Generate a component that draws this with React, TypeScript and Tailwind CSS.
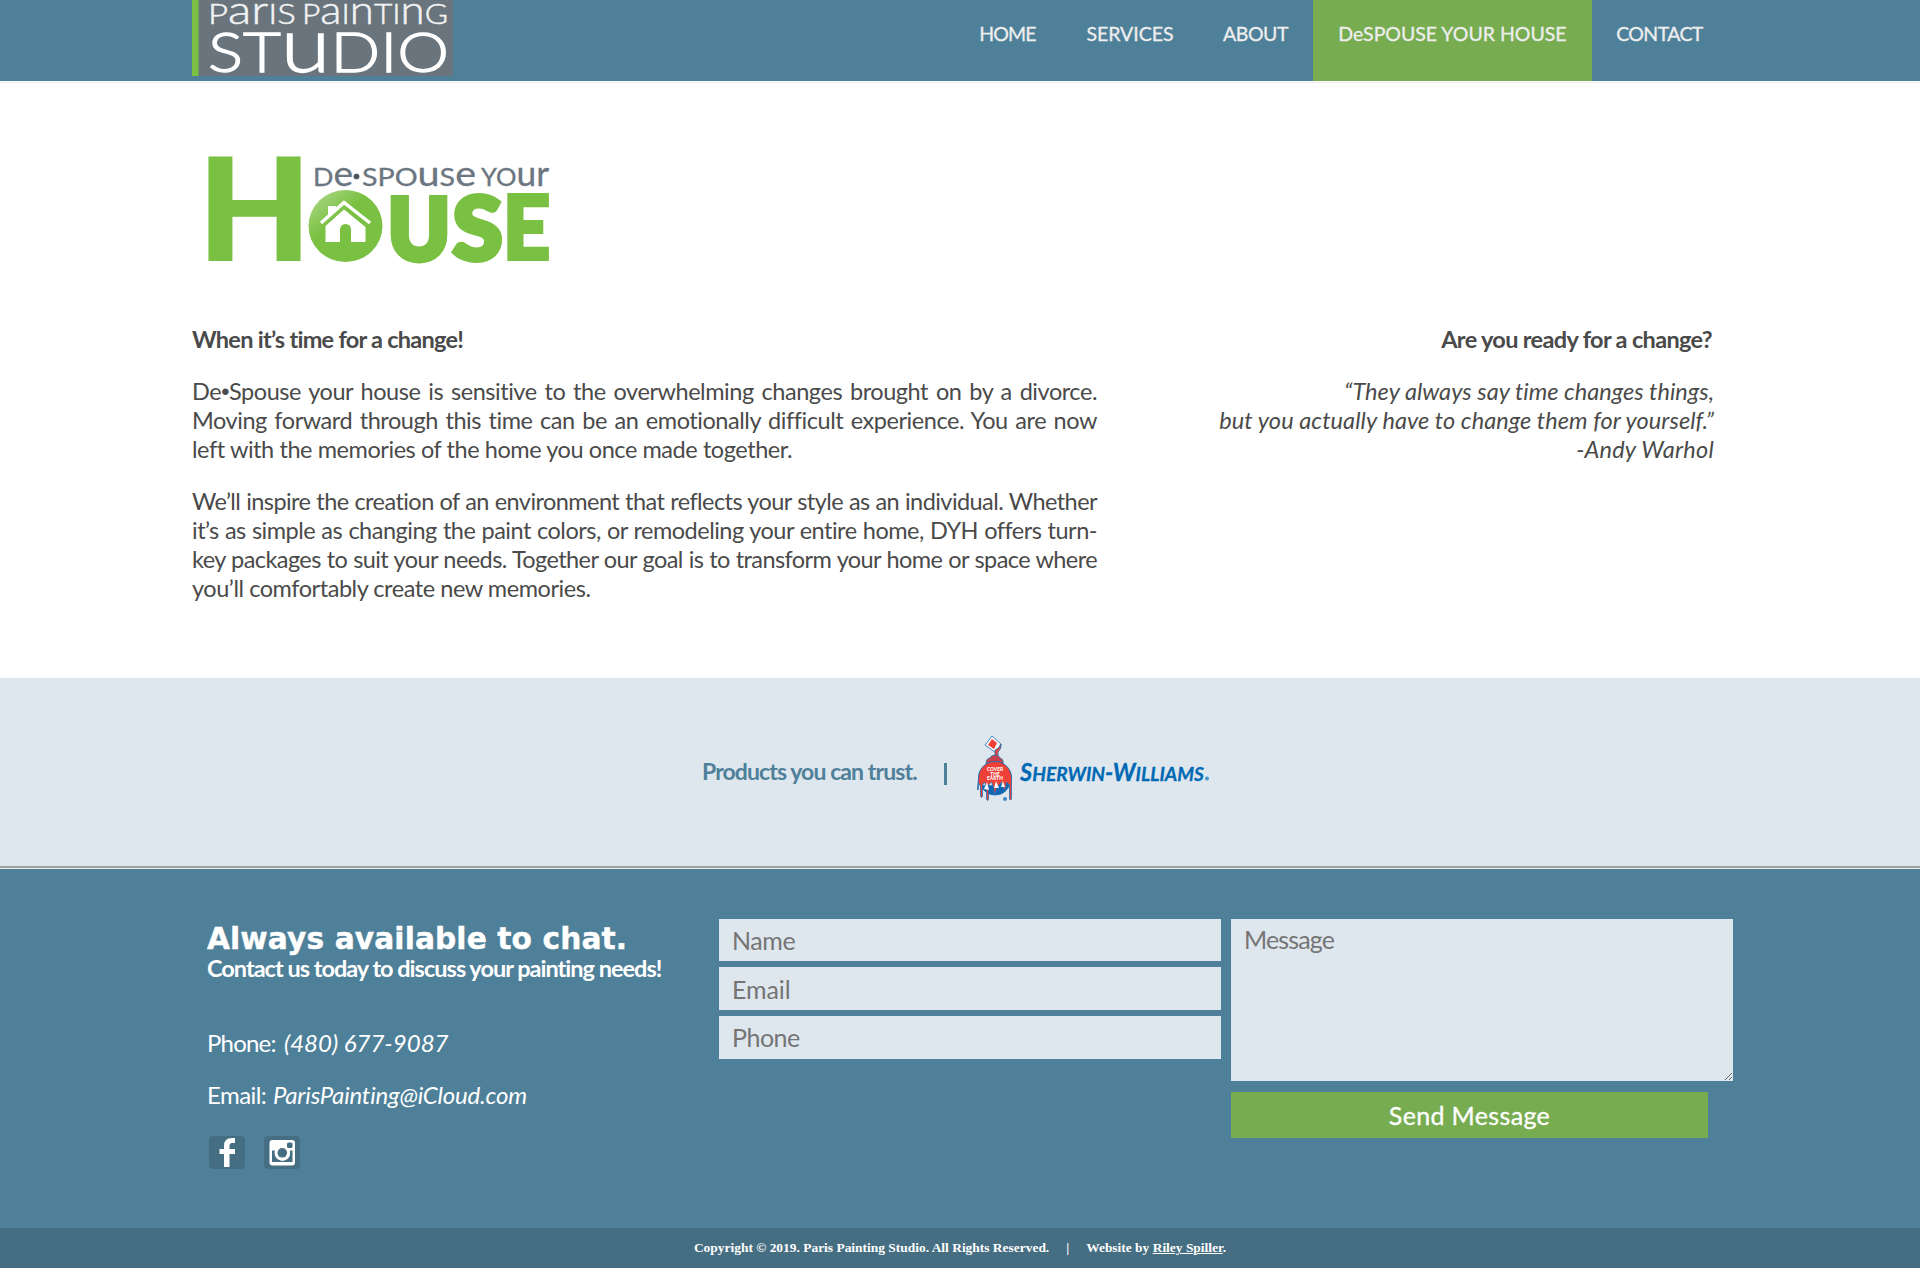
import type { ReactNode } from 'react';

/* Unicase lettering: lowercase forms are enlarged to the height of the capitals. */
function Unicase({ x, y, width, size, children }: { x: number; y: number; width: number; size: number; children: string }) {
  const runs = children.match(/[a-z]+|[A-Z]+/g) ?? [];
  return (
    <text x={x} y={y} fontSize={size} textLength={width} lengthAdjust="spacingAndGlyphs">
      {runs.map((run, i) => (
        <tspan key={i} fontSize={/[a-z]/.test(run) ? size * 1.38 : size}>
          {run}
        </tspan>
      ))}
    </text>
  );
}

function StudioLogo() {
  return (
    <svg width="261" height="76" viewBox="0 0 261 76" fontFamily="Lato, sans-serif" fontWeight="300" fill="#f1f2f3" aria-label="Paris Painting Studio">
      <rect width="261" height="76" fill="#69747c" />
      <rect width="6.5" height="76" fill="#7ac143" />
      <g stroke="#f1f2f3" strokeWidth="0.5">
        <Unicase x={16} y={23.5} width={88} size={28}>ParIS</Unicase>
        <Unicase x={110} y={23.5} width={146} size={28}>PaInTInG</Unicase>
      </g>
      <g fill="#ffffff" stroke="#ffffff" strokeWidth="1.300">
        <Unicase x={16} y={71.5} width={241} size={56}>STuDIO</Unicase>
      </g>
    </svg>
  );
}

function HouseLogo() {
  return (
    <svg width="360" height="120" viewBox="0 0 360 120" fontFamily="Lato, sans-serif" aria-label="De-Spouse Your House">
      <defs>
        <linearGradient id="shine" x1="0" y1="0" x2="0.6" y2="0.7">
          <stop offset="0" stopColor="#b5dc93" />
          <stop offset="0.6" stopColor="#7ac143" />
        </linearGradient>
      </defs>
      <g fill="#6b7681" stroke="#6b7681" strokeWidth="0.300">
        <Unicase x={113} y={37.5} width={40} size={25}>De</Unicase>
        <circle cx="156.500" cy="28.500" r="2.800" fill="#4a5560" />
        <Unicase x={162} y={37.5} width={114} size={25}>SPOuSe</Unicase>
        <Unicase x={281} y={37.5} width={68} size={25}>YOur</Unicase>
      </g>
      <g fill="#7ac143" stroke="#7ac143" fontWeight="900">
        <text x="-1.500" y="112" fontSize="142" textLength="112" lengthAdjust="spacingAndGlyphs" strokeWidth="2">H</text>
        <text x="188" y="111.500" fontSize="86" textLength="62" lengthAdjust="spacingAndGlyphs" strokeWidth="6">U</text>
        <text x="252.500" y="111.500" fontSize="87" textLength="50" lengthAdjust="spacingAndGlyphs" strokeWidth="5">S</text>
        <text x="303" y="111" fontSize="87" textLength="47" lengthAdjust="spacingAndGlyphs" strokeWidth="4">E</text>
      </g>
      <ellipse cx="145.500" cy="78" rx="37" ry="36" fill="url(#shine)" />
      <g fill="#fff" transform="translate(-10)">
        <path d="M138 58h8v5l-8 7z" />
        <path d="M131 75l23-20.500L180 75" fill="none" stroke="#fff" strokeWidth="3.500" />
        <path d="M135.500 78L154 61.500 175.500 79v15H161V82q0-6-5.500-6t-5.500 6v12h-14.500z" />
      </g>
    </svg>
  );
}

function SherwinWilliamsLogo() {
  return (
    <svg width="236" height="68" viewBox="0 0 236 68" fontFamily="Lato, sans-serif" aria-label="Sherwin-Williams">
      <g stroke="#1f6fb5" strokeWidth="0.800">
        <path d="M15 1l9 8-5 9-11-8z" fill="#f6f8fb" />
        <path d="M15 4l5 4-3 6-6-4z" fill="#ee4036" strokeWidth="0" />
        <path d="M24 9q-1 4-6 6v9h3v-7q4-4 3-8z" fill="#ee4036" />
        <path d="M9 30q0-7 4-7 1-3 5-3t5 3q4 1 3 7z" fill="#c8414a" />
        <circle cx="18" cy="43" r="16.500" fill="#f6f8fb" />
        <path d="M4 50q7 1 13 0t16-3q-3 13-15 13-10 0-14-10z" fill="#0d68b4" />
        <path d="M1.500 43a16.500 16.500 0 0 1 33 0V64q-1 2-2 0V50l-3-3-1 7q-1 1-2-1l-2-6-3 4-2 1-1 7h-1l-1-7-2-5-3 3v14q-1 3-2 0V53l-2-6-2 3v11q-1 3-2 0V51l-2-3v6q-1 2-1 0z" fill="#ee4036" />
      </g>
      <path d="M7 54l3-7 2 8zM17 53l2-7 3 7zM24 52l2-6 2 6z" fill="#f6f8fb" />
      <g fill="#fff" fontSize="4.800" fontWeight="900" textAnchor="middle">
        <text x="18" y="36">COVER</text>
        <text x="18" y="40.500">THE</text>
        <text x="18" y="45">EARTH</text>
      </g>
      <circle cx="28" cy="64" r="2" fill="#3f86c3" />
      <text x="43" y="45.500" fill="#0069b4" stroke="#0069b4" strokeWidth="0.300" fontWeight="700" fontStyle="italic" fontSize="24" textLength="184" lengthAdjust="spacingAndGlyphs">
        S<tspan fontSize="19.500">HERWIN</tspan>-W<tspan fontSize="19.500">ILLIAMS</tspan>
      </text>
      <circle cx="230" cy="43.500" r="2" fill="#4a94cc" />
    </svg>
  );
}

function Line({ className = '', children }: { className?: string; children: ReactNode }) {
  return <span className={`block whitespace-nowrap ${className}`}>{children}</span>;
}

const nav = [
  { label: 'HOME', className: 'w-[107px] pr-[2px] tracking-[-0.9px]' },
  { label: 'SERVICES', className: 'w-[137px] pr-[1px]' },
  { label: 'ABOUT', className: 'w-[114px] pr-[1px] tracking-[-0.45px]' },
  { label: 'DeSPOUSE YOUR HOUSE', className: 'w-[279px] bg-[#77ac50]' },
  { label: 'CONTACT', className: 'w-[136px] pr-[1px] tracking-[-0.6px]' },
];

const field = 'block w-[502px] bg-[#dfe7ee] px-[13px] text-[25px] text-[#757575] placeholder:text-[#757575] outline-none';

export default function App() {
  return (
    <div className="h-[1281px] overflow-hidden bg-white font-['Lato',sans-serif] text-[#4a4a4a]">
      <header className="flex h-[81px] items-start justify-between bg-[#4f8099] px-[192px]">
        <StudioLogo />
        <nav className="flex">
          {nav.map((item) => (
            <a key={item.label} className={`h-[81px] text-center text-[19.5px] leading-[67px] whitespace-nowrap text-[#eeeeee] [-webkit-text-stroke:0.3px] ${item.className}`}>
              {item.label}
            </a>
          ))}
        </nav>
      </header>
      <div className="mt-px h-px bg-[#eeeeee]" />

      <main className="h-[595px] px-[192px] pt-[65px]">
        <div className="ml-2">
          <HouseLogo />
        </div>
        <div className="mt-[57px] flex justify-between text-[23.5px] leading-[29px]">
          <section className="w-[905px]">
            <h2 className="font-bold tracking-[-0.73px]">When it’s time for a change!</h2>
            <p className="mt-[23px]">
              <Line className="h-[29px] tracking-[-0.45px] [text-align-last:justify]">
                De<span className="font-['Liberation_Sans'] leading-none">•</span>Spouse your house is sensitive to the overwhelming changes brought on by a divorce.
              </Line>
              <Line className="tracking-[-0.45px] [text-align-last:justify]">Moving forward through this time can be an emotionally difficult experience. You are now</Line>
              <Line className="tracking-[-0.43px]">left with the memories of the home you once made together.</Line>
            </p>
            <p className="mt-[23px]">
              <Line className="tracking-[-0.56px] [text-align-last:justify]">We’ll inspire the creation of an environment that reflects your style as an individual. Whether</Line>
              <Line className="tracking-[-0.5px] [text-align-last:justify]">it’s as simple as changing the paint colors, or remodeling your entire home, DYH offers turn-</Line>
              <Line className="tracking-[-0.58px] [text-align-last:justify]">key packages to suit your needs. Together our goal is to transform your home or space where</Line>
              <Line className="tracking-[-0.45px]">you’ll comfortably create new memories.</Line>
            </p>
          </section>
          <section className="w-[522px] text-right">
            <h2 className="pr-[16px] font-bold tracking-[-0.66px]">Are you ready for a change?</h2>
            <p className="mt-[23px] pr-[14px] italic">
              <Line className="tracking-[0.04px]">“They always say time changes things,</Line>
              <Line className="tracking-[0.09px]">but you actually have to change them for yourself.”</Line>
              <Line className="tracking-[0.25px]">-Andy Warhol</Line>
            </p>
          </section>
        </div>
      </main>

      <section className="flex h-[188px] items-start bg-[#dfe7ee] pl-[702px] text-[#4f8099]">
        <p className="mt-[79px] w-[242px] text-[23px] leading-[29px] font-bold tracking-[-0.9px] whitespace-nowrap">Products you can trust.</p>
        <div className="mt-[85px] h-[22px] w-[3px] bg-[#4f8099]" />
        <div className="mt-[57px] ml-[30px]">
          <SherwinWilliamsLogo />
        </div>
      </section>
      <div className="h-[3px] border-t-2 border-[#a0a0a0] bg-[#eeeeee]" />

      <footer className="text-white">
        <div className="flex h-[359px] items-start bg-[#4f8099] pl-[207px]">
          <section className="w-[512px] pt-[54px] text-2xl leading-[29px] whitespace-nowrap">
            <h2 className="font-['DejaVu_Sans',sans-serif] text-[29.7px] leading-[31px] font-bold tracking-[0.09px] [-webkit-text-stroke:0.4px]">Always available to chat.</h2>
            <h3 className="text-[23.5px] font-bold tracking-[-0.99px]">Contact us today to discuss your painting needs!</h3>
            <p className="mt-[45px]">
              <span className="mr-[3px] tracking-[-0.8px]">Phone: </span>
              <em>(480) 677-9087</em>
            </p>
            <p className="mt-[23px]">
              <span className="mr-px tracking-[-0.55px]">Email: </span>
              <em className="tracking-[-0.2px]">ParisPainting@iCloud.com</em>
            </p>
            <div className="mt-[27px] ml-[2px] flex gap-[19px]">
              <svg width="36" height="33" viewBox="0 0 36 33">
                <rect width="36" height="33" rx="4" fill="#466e82" />
                <path d="M15 31V18h-4.500v-5H15V10q0-8 8-8h3v5h-3q-2.500 0-2.500 3v3H26v5h-5.500v13z" fill="#fff" />
              </svg>
              <svg width="36" height="33" viewBox="0 0 36 33">
                <rect width="36" height="33" rx="4" fill="#466e82" />
                <rect x="5.500" y="4" width="25.500" height="25.500" rx="3" fill="#fff" />
                <path d="M8 14.500h3.500a7.500 7.500 0 1 0 14 0H28.500V26H8z" fill="#466e82" />
                <circle cx="18.300" cy="16.800" r="7.800" fill="#fff" />
                <circle cx="18.300" cy="16.800" r="4.800" fill="#466e82" />
                <rect x="23" y="6.500" width="5.500" height="5.500" rx="1.500" fill="#466e82" />
              </svg>
            </div>
          </section>
          <div className="flex w-[512px] flex-col gap-[6px] pt-[50px]">
            <input className={`${field} h-[42px] tracking-[-0.4px]`} placeholder="Name" />
            <input className={`${field} h-[43px] tracking-[-0.1px]`} placeholder="Email" />
            <input className={`${field} h-[43px] pb-[2px] tracking-[-0.5px]`} placeholder="Phone" />
          </div>
          <div className="pt-[50px]">
            <textarea className={`${field} h-[162px] resize pt-[5px] leading-[30px] tracking-[-0.85px]`} placeholder="Message" />
            <button className="mt-[11px] block h-[46px] w-[477px] bg-[#77ac50] pt-px text-[25px] tracking-[0.35px] [-webkit-text-stroke:0.3px]">Send Message</button>
          </div>
        </div>
        <div className="flex h-[40px] items-center justify-center bg-[#466e82] font-['Liberation_Serif',serif] text-[13.45px] font-bold whitespace-pre">
          <span>Copyright © 2019. Paris Painting Studio. All Rights Reserved.</span>
          <span className="w-[37px] text-center">|</span>
          <span>Website by <a className="underline">Riley Spiller</a>.</span>
        </div>
      </footer>
    </div>
  );
}
